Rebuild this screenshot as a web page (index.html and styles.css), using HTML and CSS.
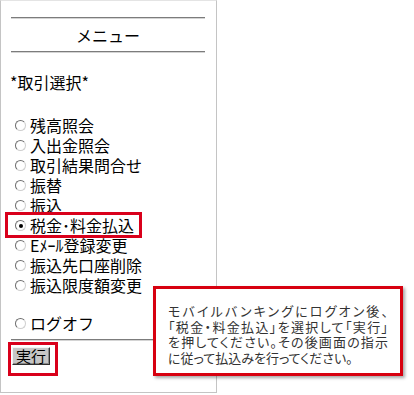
FILE: index.html
```html
<!DOCTYPE html>
<html lang="ja">
<head>
<meta charset="utf-8">
<title>メニュー</title>
<link rel="stylesheet" href="styles.css">
</head>
<body>
<div class="stage">
  <div class="phone">
    <div class="rule rule-top"></div>
    <div class="title">メニュー</div>
    <div class="rule"></div>
    <div class="section">*取引選択*</div>
    <form class="menu">
      <label class="row"><input type="radio" name="m"><span>残高照会</span></label>
      <label class="row"><input type="radio" name="m"><span>入出金照会</span></label>
      <label class="row"><input type="radio" name="m"><span>取引結果問合せ</span></label>
      <label class="row"><input type="radio" name="m"><span>振替</span></label>
      <label class="row"><input type="radio" name="m"><span>振込</span></label>
      <label class="row row-marked"><input type="radio" name="m" checked><span>税金･料金払込</span></label>
      <label class="row"><input type="radio" name="m"><span>Eﾒｰﾙ登録変更</span></label>
      <label class="row"><input type="radio" name="m"><span>振込先口座削除</span></label>
      <label class="row"><input type="radio" name="m"><span>振込限度額変更</span></label>
      <label class="row row-logoff"><input type="radio" name="m"><span>ログオフ</span></label>
      <div class="rule rule-bottom"></div>
      <div class="btn-mark"><button type="button" class="btn">実行</button></div>
    </form>
  </div>
  <div class="callout">
    <div class="cl cl-j">モバイルバンキングにログオン後、</div>
    <div class="cl cl-j">「税金・料金払込」を選択して「実行」</div>
    <div class="cl cl-j">を押してください。その後画面の指示</div>
    <div class="cl">に従って払込みを行ってください。</div>
  </div>
</div>
</body>
</html>
```
FILE: styles.css
```css
html, body {
  margin: 0;
  padding: 0;
  background: #ffffff;
}

.stage {
  position: relative;
  width: 414px;
  height: 395px;
  overflow: hidden;
}

.phone {
  box-sizing: border-box;
  width: 217px;
  height: 393px;
  border-left: 1px solid #c4c4c4;
  border-right: 1px solid #c4c4c4;
  border-bottom: 1px solid #c4c4c4;
  border-top: 1px solid #e4e4e4;
  padding: 0 11px 0 10px;
  font-family: "Noto Sans CJK JP", "Noto Sans", sans-serif;
  font-size: 16px;
  font-weight: 400;
  line-height: 20px;
  color: #000;
}

.rule {
  height: 0;
  border-top: 1px solid #7c7c7c;
  border-bottom: 1px solid #d4d4d4;
}

.rule-top {
  margin-top: 16px;
}

.title {
  margin: 6px 0;
  text-align: center;
}

.section {
  margin: 19px 0 0 -1px;
}

.menu {
  margin: 23px 0 0;
  display: flex;
  flex-direction: column;
  align-items: flex-start;
}

.row {
  display: flex;
  align-items: center;
  height: 20px;
  margin: -3px 0 -3px -6px;
  padding: 0 5px 0 8px;
  border: 3px solid transparent;
}

.row-marked {
  border-color: #d9001b;
}

.row-logoff {
  margin-top: 15px;
}

.row input {
  -webkit-appearance: none;
  appearance: none;
  box-sizing: border-box;
  width: 11px;
  height: 11px;
  margin: 1px 4px 0 -1px;
  border-radius: 50%;
  border: 1px solid;
  border-color: #6e6e6e #cfcfcf #cfcfcf #6e6e6e;
  background: #fff;
  position: relative;
}

.row input:checked::after {
  content: "";
  position: absolute;
  left: 2.5px;
  top: 2.5px;
  width: 4px;
  height: 4px;
  border-radius: 50%;
  background: #000;
}

.rule-bottom {
  align-self: stretch;
  margin-top: 6px;
}

.btn-mark {
  margin: 1px 0 0 -3px;
  padding: 2px 5px 8px 1px;
  border: 3px solid #d9001b;
}

.btn {
  display: flex;
  align-items: center;
  justify-content: center;
  box-sizing: border-box;
  width: 38px;
  height: 18px;
  margin: 0;
  padding: 0 0 1px;
  font-family: "Noto Sans CJK JP", sans-serif;
  font-size: 15px;
  font-weight: 400;
  line-height: 14px;
  color: #000;
  background: #c6c6c6;
  border: 1px solid;
  border-color: #f4f4f4 #303030 #303030 #f4f4f4;
  box-shadow: inset -1px -1px 0 #8a8a8a;
}

.callout {
  position: absolute;
  left: 153px;
  top: 286px;
  box-sizing: border-box;
  width: 250px;
  height: 90px;
  padding: 14px 12px 0 12px;
  background: #fff;
  border: 3px solid #d7000f;
  box-shadow: 2px 2px 3px rgba(0, 0, 0, 0.35);
  font-family: "Noto Sans CJK JP", sans-serif;
  font-size: 13px;
  line-height: 15.7px;
  color: #333;
  font-feature-settings: "palt";
}

.cl {
  white-space: nowrap;
  height: 15.7px;
}

.cl-j {
  text-align: justify;
  text-align-last: justify;
  white-space: normal;
}
```
